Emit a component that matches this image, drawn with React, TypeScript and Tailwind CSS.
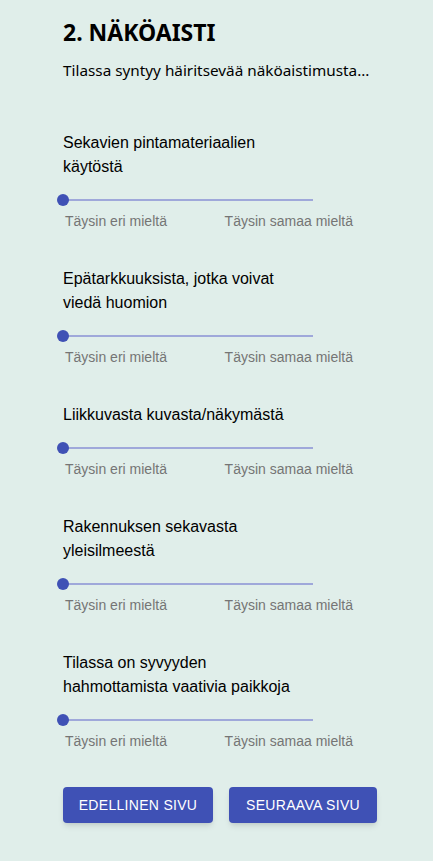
import React from 'react';

const questions = [
  'Sekavien pintamateriaalien käytöstä',
  'Epätarkkuuksista, jotka voivat viedä huomion',
  'Liikkuvasta kuvasta/näkymästä',
  'Rakennuksen sekavasta yleisilmeestä',
  'Tilassa on syvyyden hahmottamista vaativia paikkoja',
];

const Question = ({ text }: { text: string }) => (
  <div className="mt-[36px] first:mt-0">
    <p className="w-[240px] text-[16px] leading-6 text-black">{text}</p>
    {/* Slider */}
    <div className="relative mt-[15px] h-3 w-[256px] -ml-[6px]">
      <div className="absolute left-[6px] right-0 top-[5px] h-[2px] bg-[#9fa8da]"></div>
      <div className="absolute left-0 top-0 h-3 w-3 rounded-full bg-[#3f51b5]"></div>
    </div>
    <div className="mt-[5px] flex w-[290px] justify-between pl-[2px] text-[14px] leading-5 text-[#757575]">
      <span>Täysin eri mieltä</span>
      <span>Täysin samaa mieltä</span>
    </div>
  </div>
);

const App = () => {
  return (
    <div className="min-h-[861px] w-full bg-[#e0eeea] font-['Liberation_Sans',Arial,sans-serif]">
      <div className="pl-[63px] pr-4 pt-[16px] pb-[38px]">
        <h1 className="font-['Noto_Sans',sans-serif] text-[23px] font-bold leading-8 text-black">
          2. NÄKÖAISTI
        </h1>
        <p className="mt-[10px] font-['Noto_Sans',sans-serif] text-[15.3px] leading-6 text-black">
          Tilassa syntyy häiritsevää näköaistimusta...
        </p>
        <div className="mt-[49px]">
          {questions.map((q) => (
            <Question key={q} text={q} />
          ))}
        </div>
        <div className="mt-[36px] flex gap-4">
          <button className="h-9 w-[150px] rounded bg-[#3f51b5] text-[14px] uppercase tracking-[0.3px] text-white shadow-md">
            Edellinen sivu
          </button>
          <button className="h-9 w-[148px] rounded bg-[#3f51b5] text-[14px] uppercase tracking-[0.3px] text-white shadow-md">
            Seuraava sivu
          </button>
        </div>
      </div>
    </div>
  );
};

export default App;
